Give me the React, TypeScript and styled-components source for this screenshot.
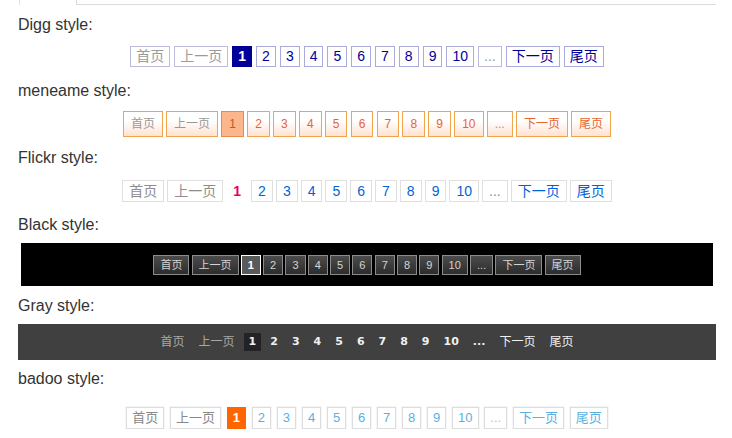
import styled, { createGlobalStyle, css } from "styled-components";

type Kind = "disabled" | "current" | "page" | "more" | "nav";

type PagerItem = { label: string; kind: Kind };

const items: PagerItem[] = [
    { label: "首页", kind: "disabled" },
    { label: "上一页", kind: "disabled" },
    { label: "1", kind: "current" },
    ...["2", "3", "4", "5", "6", "7", "8", "9", "10"].map((n) => ({ label: n, kind: "page" as Kind })),
    { label: "...", kind: "more" },
    { label: "下一页", kind: "nav" },
    { label: "尾页", kind: "nav" },
];

const GlobalStyle = createGlobalStyle`
    body {
        margin: 0;
        background: #fff;
        font-family: "Liberation Sans", "Noto Sans CJK SC", Arial, sans-serif;
    }
`;

const Page = styled.div`
    width: 698px;
    margin: 0 16px 0 18px;
`;

const TabBar = styled.div`
    display: flex;
    height: 5px;
`;

const ActiveTab = styled.div`
    width: 56px;
    margin-left: 1px;
    border-left: 1px solid #e2e2e2;
    border-right: 1px solid #d8d8d8;
`;

const TabRest = styled.div`
    flex: 1;
    border-bottom: 1px solid #dcdcdc;
`;

const Label = styled.div<{ $first?: boolean }>`
    font-size: 16px;
    line-height: 18px;
    padding-top: 2px;
    color: #333;
    margin-top: ${({ $first }) => ($first ? "9px" : "0")};
`;

const Row = styled.div`
    display: flex;
    justify-content: center;
    align-items: center;
`;

/* Digg */
const DiggBar = styled(Row)`
    gap: 4px;
    padding: 12px 0 13px;
`;

const DiggItem = styled.span<{ $kind: Kind }>`
    padding: 2px 5px;
    border: 1px solid #aaaadd;
    color: #000099;
    font-size: 14px;
    line-height: 15px;
    ${({ $kind }) =>
        $kind === "current" &&
        css`
            background: #000099;
            border-color: #000099;
            color: #fff;
            font-weight: bold;
        `}
    ${({ $kind }) =>
        ($kind === "disabled" || $kind === "more") &&
        css`
            border-color: #bcbcdc;
            color: #9a9a9a;
        `}
`;

/* meneame */
const MeneameBar = styled(Row)`
    gap: 3.2px;
    padding: 11px 0 10px;
`;

const MeneameItem = styled.span<{ $kind: Kind }>`
    padding: 5px 7px;
    border: 1px solid #f0a44c;
    background: linear-gradient(#ffffff 35%, #ffe2d2);
    color: #e8642f;
    font-size: 12px;
    line-height: 14px;
    ${({ $kind }) =>
        $kind === "current" &&
        css`
            background: #fcb68c;
            border-color: #e48c50;
            color: #c9552a;
        `}
    ${({ $kind }) =>
        ($kind === "disabled" || $kind === "more") &&
        css`
            color: #9a9a9a;
        `}
`;

/* Flickr */
const FlickrBar = styled(Row)`
    gap: 3px;
    padding: 13px 0 12px;
`;

const FlickrItem = styled.span<{ $kind: Kind }>`
    padding: 2px 6px;
    border: 1px solid #dedfde;
    color: #0063dc;
    font-size: 14px;
    line-height: 16px;
    ${({ $kind }) =>
        $kind === "current" &&
        css`
            border-color: transparent;
            color: #e8005c;
            font-weight: bold;
        `}
    ${({ $kind }) =>
        ($kind === "disabled" || $kind === "more") &&
        css`
            color: #8e8e8e;
        `}
`;

/* Black */
const BlackBar = styled(Row)`
    gap: 2.2px;
    margin: 9px 3px;
    padding: 12px 0 11px;
    background: #000;
`;

const BlackItem = styled.span<{ $kind: Kind }>`
    padding: 2px 6px;
    border: 1px solid #8c8c8c;
    background: linear-gradient(#4c4c4c, #2c2c2c);
    color: #d4d4d4;
    font-size: 11px;
    line-height: 14px;
    ${({ $kind }) =>
        $kind === "current" &&
        css`
            border-color: #fff;
            background: #5a5a5a;
            color: #fff;
            font-weight: bold;
        `}
`;

/* Gray */
const GrayBar = styled(Row)`
    gap: 4px;
    height: 36px;
    margin: 9px 0 8px;
    background: #404040;
`;

const GrayItem = styled.span<{ $kind: Kind }>`
    padding: 2px 5px;
    color: #f0f0f0;
    font-family: "DejaVu Sans", "Noto Sans CJK SC", sans-serif;
    font-size: 12px;
    line-height: 14px;
    ${({ $kind }) =>
        ($kind === "page" || $kind === "current" || $kind === "more") &&
        css`
            font-size: 11px;
            font-weight: bold;
        `}
    ${({ $kind }) =>
        $kind === "current" &&
        css`
            background: #232327;
        `}
    ${({ $kind }) =>
        $kind === "disabled" &&
        css`
            color: #a8a8a8;
        `}
`;

/* badoo */
const BadooBar = styled(Row)`
    gap: 5.8px;
    padding: 19px 0 0;
`;

const BadooItem = styled.span<{ $kind: Kind }>`
    padding: 2px 5px;
    border: 1px solid #dddddd;
    box-shadow: 0 0 0 1px #f6f6f6;
    background: #fff;
    color: #5cb0e0;
    font-size: 13px;
    line-height: 16px;
    ${({ $kind }) =>
        $kind === "current" &&
        css`
            background: #ff6600;
            border-color: #ff6600;
            box-shadow: none;
            color: #fff;
            font-weight: bold;
        `}
    ${({ $kind }) =>
        $kind === "disabled" &&
        css`
            color: #888;
        `}
    ${({ $kind }) =>
        $kind === "more" &&
        css`
            color: #bbb;
        `}
`;

const App = () => {
    return (
        <Page>
            <GlobalStyle />
            <TabBar>
                <ActiveTab />
                <TabRest />
            </TabBar>

            <Label $first>Digg style:</Label>
            <DiggBar>
                {items.map((item) => (
                    <DiggItem key={item.label} $kind={item.kind}>
                        {item.label}
                    </DiggItem>
                ))}
            </DiggBar>

            <Label>meneame style:</Label>
            <MeneameBar>
                {items.map((item) => (
                    <MeneameItem key={item.label} $kind={item.kind}>
                        {item.label}
                    </MeneameItem>
                ))}
            </MeneameBar>

            <Label>Flickr style:</Label>
            <FlickrBar>
                {items.map((item) => (
                    <FlickrItem key={item.label} $kind={item.kind}>
                        {item.label}
                    </FlickrItem>
                ))}
            </FlickrBar>

            <Label>Black style:</Label>
            <BlackBar>
                {items.map((item) => (
                    <BlackItem key={item.label} $kind={item.kind}>
                        {item.label}
                    </BlackItem>
                ))}
            </BlackBar>

            <Label>Gray style:</Label>
            <GrayBar>
                {items.map((item) => (
                    <GrayItem key={item.label} $kind={item.kind}>
                        {item.label}
                    </GrayItem>
                ))}
            </GrayBar>

            <Label>badoo style:</Label>
            <BadooBar>
                {items.map((item) => (
                    <BadooItem key={item.label} $kind={item.kind}>
                        {item.label}
                    </BadooItem>
                ))}
            </BadooBar>
        </Page>
    );
};

export default App;
